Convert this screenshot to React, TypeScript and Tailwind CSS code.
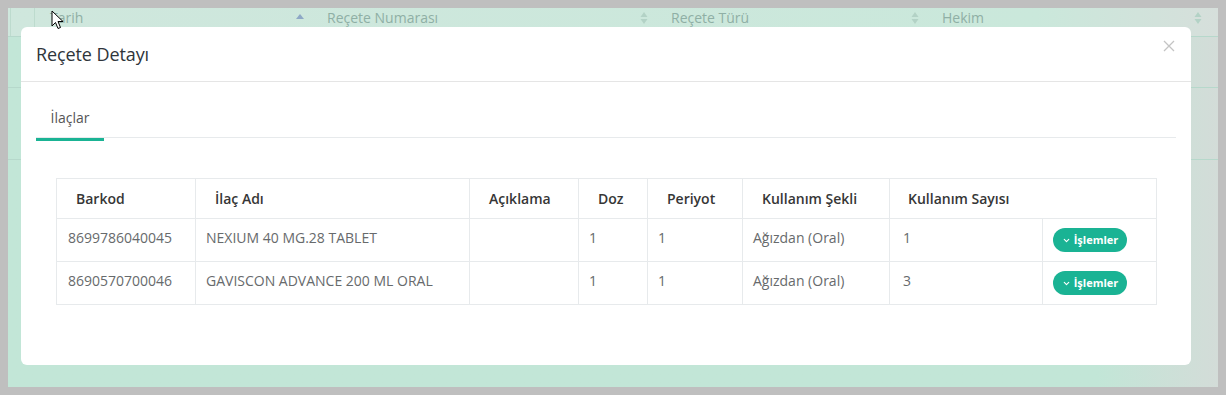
import { ChevronDown } from "lucide-react"

const backdropCols = [
  { label: "Tarih", width: "w-[277px]", sort: "asc" },
  { label: "Reçete Numarası", width: "w-[344px]", sort: "none" },
  { label: "Reçete Türü", width: "w-[271px]", sort: "none" },
  { label: "Hekim", width: "w-[283px]", sort: "none" },
]

const headers = [
  { label: "Barkod", width: "w-[139px]" },
  { label: "İlaç Adı", width: "w-[274px]" },
  { label: "Açıklama", width: "w-[109px]" },
  { label: "Doz", width: "w-[69px]" },
  { label: "Periyot", width: "w-[95px]" },
  { label: "Kullanım Şekli", width: "w-[147px]" },
]

const rows = [
  {
    barkod: "8699786040045",
    ad: "NEXIUM 40 MG.28 TABLET",
    aciklama: "",
    doz: "1",
    periyot: "1",
    sekil: "Ağızdan (Oral)",
    sayi: "1",
  },
  {
    barkod: "8690570700046",
    ad: "GAVISCON ADVANCE 200 ML ORAL",
    aciklama: "",
    doz: "1",
    periyot: "1",
    sekil: "Ağızdan (Oral)",
    sayi: "3",
  },
]

function SortIcon({ dir }: { dir: string }) {
  if (dir === "asc") {
    return (
      <svg width="8" height="12" viewBox="0 0 8 12" className="shrink-0">
        <path d="M4 2 L8 7 L0 7 Z" fill="#8ea8c6" />
      </svg>
    )
  }
  return (
    <svg width="8" height="14" viewBox="0 0 8 14" className="shrink-0">
      <path d="M4 1 L7.5 6 L0.5 6 Z" fill="#b3d2c6" />
      <path d="M4 13 L7.5 8 L0.5 8 Z" fill="#b3d2c6" />
    </svg>
  )
}

function Cursor() {
  return (
    <svg
      width="14"
      height="20"
      viewBox="0 0 14 20"
      className="absolute left-[43px] top-[2px] z-20"
    >
      <path
        d="M1 1 L1 16 L4.5 12.5 L7 18.5 L9.5 17.5 L7 11.5 L12 11.5 Z"
        fill="#ffffff"
        stroke="#000000"
        strokeWidth="1"
        strokeLinejoin="round"
      />
    </svg>
  )
}

export default function App() {
  return (
    <div
      className="w-[1226px] h-[395px] bg-[#bfbfbf] p-2 overflow-hidden"
      style={{ fontFamily: "'Open Sans', 'Noto Sans', sans-serif" }}
    >
      <div className="relative h-full w-full overflow-hidden bg-gradient-to-r from-[#c2e6d7] via-[#c2e6d7] via-90% to-[#d3dcd8]">
        <Cursor />

        {/* backdrop table */}
        <div className="flex h-[29px] items-start bg-gradient-to-r from-[#cfe7dd] via-[#cae8db] via-85% to-[#d6dfdb] border-b border-[#b6d8cb]">
          <div className="h-full w-[25px] border-l border-r border-[#bddbce] ml-[2px]" />
          {backdropCols.map((col) => (
            <div
              key={col.label}
              className={`${col.width} flex h-[19px] items-center justify-between pl-[15px] pr-[8px] text-[14px] text-[#8fafa5]`}
            >
              <span>{col.label}</span>
              <SortIcon dir={col.sort} />
            </div>
          ))}
        </div>
        <div className="flex flex-col">
          <div className="h-[51px] border-b border-[#b6d8cb]" />
          <div className="h-[72px] border-b border-[#b6d8cb]" />
        </div>

        {/* modal */}
        <div className="absolute left-[13px] top-[19px] z-10 w-[1170px] h-[338px] rounded-[6px] bg-white">
          <div className="flex h-[55px] items-center justify-between border-b border-[#e5e5e5] pl-[15px] pr-[16px]">
            <h4 className="text-[18px] font-normal text-[#2f353b] tracking-[-0.1px]">
              Reçete Detayı
            </h4>
            <svg width="12" height="12" viewBox="0 0 12 12" className="-mt-[17px]">
              <path d="M1 1 L11 11 M11 1 L1 11" stroke="#c4c4c4" strokeWidth="1.3" />
            </svg>
          </div>

          <div className="px-[15px] pt-[15px]">
            <div className="flex border-b border-[#e7eaec]">
              <div className="relative flex h-[40px] w-[68px] items-center justify-center text-[14px] text-[#555]">
                İlaçlar
                <div className="absolute -bottom-[4px] left-0 right-0 h-[3px] bg-[#1ab394]" />
              </div>
            </div>

            <div className="px-[20px] pt-[40px]">
              <table className="w-[1100px] table-fixed border-collapse text-[14px]">
                <thead>
                  <tr className="h-[40px]">
                    {headers.map((h) => (
                      <th
                        key={h.label}
                        className={`${h.width} border border-[#e7eaec] pl-[19px] text-left font-semibold text-[#363636]`}
                      >
                        {h.label}
                      </th>
                    ))}
                    <th className="w-[153px] border-y border-l border-[#e7eaec] pl-[18px] text-left font-semibold text-[#363636]">
                      Kullanım Sayısı
                    </th>
                    <th className="w-[114px] border-y border-r border-[#e7eaec]" />
                  </tr>
                </thead>
                <tbody>
                  {rows.map((r) => (
                    <tr key={r.barkod} className="h-[43px] text-[#676a6c]">
                      <td className="border border-[#e7eaec] pl-[11px] pb-[5px]">{r.barkod}</td>
                      <td className="border border-[#e7eaec] pl-[10px] pb-[5px]">{r.ad}</td>
                      <td className="border border-[#e7eaec] pl-[10px] pb-[5px]">{r.aciklama}</td>
                      <td className="border border-[#e7eaec] pl-[10px] pb-[5px]">{r.doz}</td>
                      <td className="border border-[#e7eaec] pl-[10px] pb-[5px]">{r.periyot}</td>
                      <td className="border border-[#e7eaec] pl-[10px] pb-[5px]">{r.sekil}</td>
                      <td className="border border-[#e7eaec] pl-[13px] pb-[5px]">{r.sayi}</td>
                      <td className="border border-[#e7eaec] pl-[10px]">
                        <button className="flex h-[24px] w-[74px] items-center justify-center gap-[3px] rounded-full bg-[#1ab394] text-[11px] font-bold text-white">
                          <ChevronDown size={9} strokeWidth={3} />
                          İşlemler
                        </button>
                      </td>
                    </tr>
                  ))}
                </tbody>
              </table>
            </div>
          </div>
        </div>
      </div>
    </div>
  )
}
